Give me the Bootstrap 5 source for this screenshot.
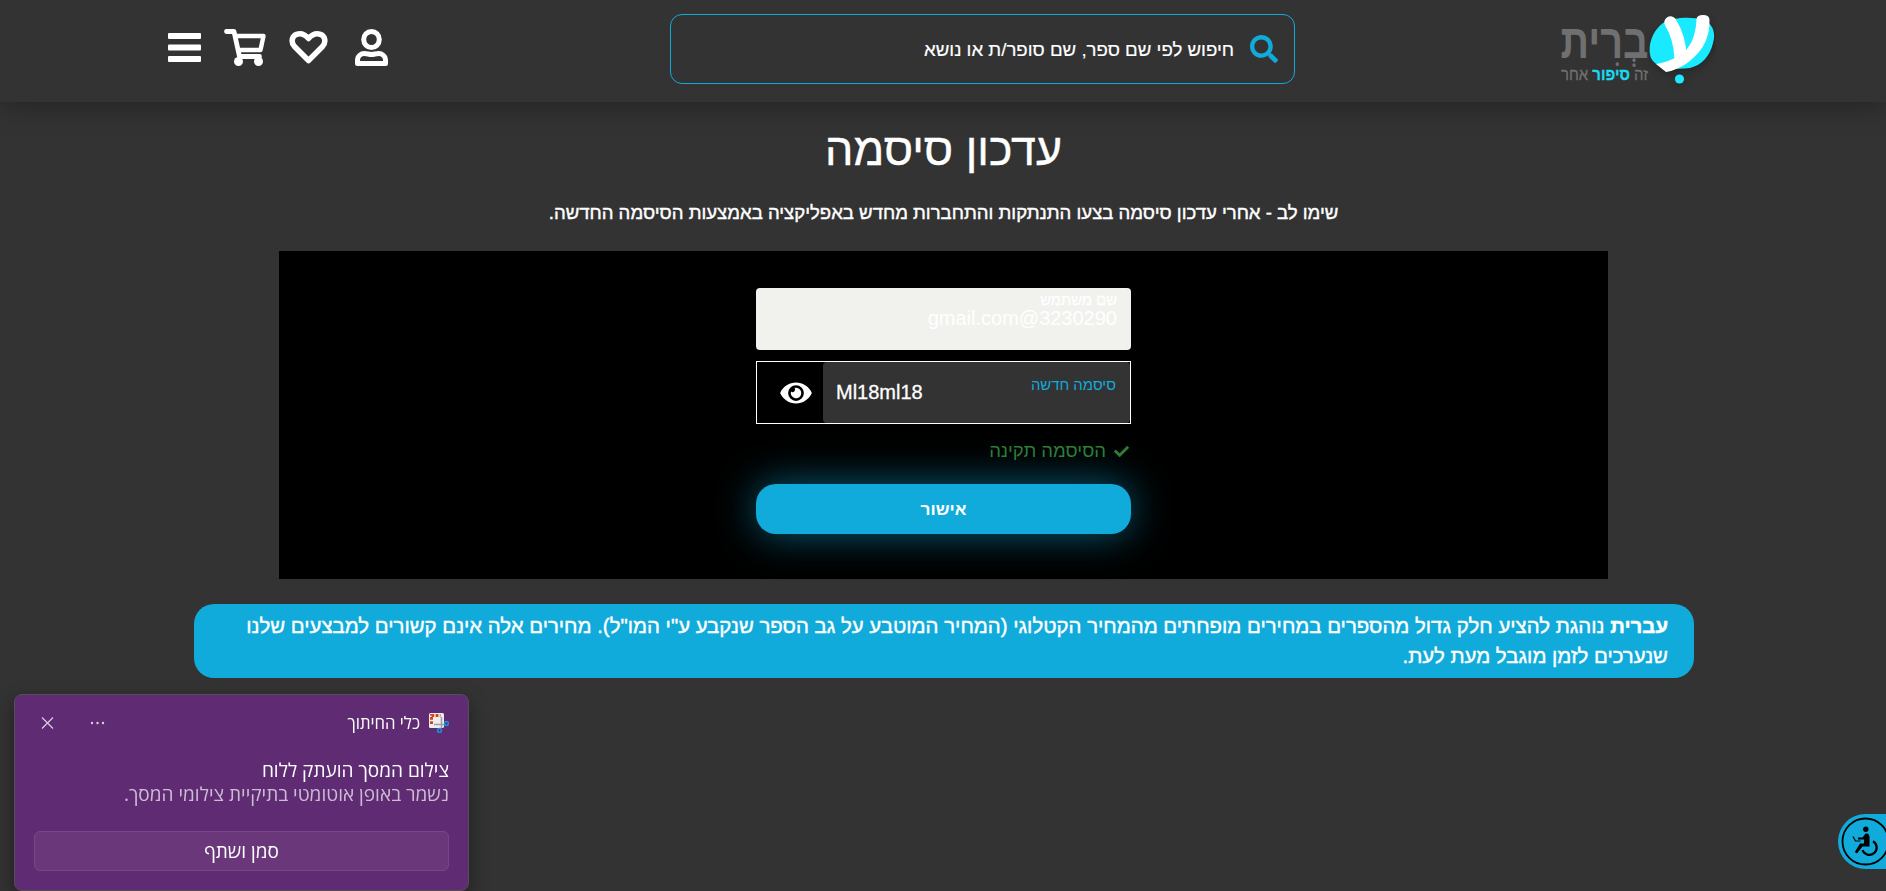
<!DOCTYPE html>
<html lang="he" dir="rtl">
<head>
<meta charset="utf-8">
<meta name="viewport" content="width=device-width, initial-scale=1">
<title>עדכון סיסמה</title>
<link href="https://cdn.jsdelivr.net/npm/bootstrap@5.3.0/dist/css/bootstrap.min.css" rel="stylesheet">
<style>
  :root{--sky:#11abdb}
  body{background:#333;color:#fff;height:100vh;overflow:hidden;font-family:"Liberation Sans",Arial,sans-serif}
  svg{display:block;flex:none}
  .latin{font-size:20px;line-height:20px}
  .sky{color:var(--sky)}
  .semi{-webkit-text-stroke:.4px #fff}

  .topbar{height:102px;background:#333;box-shadow:0 0 30px rgba(0,0,0,.4);padding:0 170px 0 168px}
  .brand{width:173px}
  .brand-mark{filter:drop-shadow(1px 3px 4px rgba(0,0,0,.25))}
  .searchbox{width:625px;height:70px;margin:14px 248px 0 0;border:1px solid var(--sky);border-radius:12px;padding:0 16px}
  .search-hint{font-size:18.65px;line-height:28px;padding-top:2px;-webkit-text-stroke:.2px #fff}
  .tools{margin-top:29px;margin-right:auto}

  main{padding-left:1px}
  .page-title{font-size:44.8px;font-weight:400;line-height:50px;margin:22px 0 27px}
  .page-note{font-size:18.57px;line-height:24px;margin-bottom:26px}
  .panel{width:1329px;height:328px;background:#000;padding-top:37px}
  .formcol{width:375px}
  .userfield{height:62px;background:#f1f2ee;border-radius:4px;padding:4px 14px 0}
  .userfield label{font-size:14.8px;line-height:16px;display:block;-webkit-text-stroke:.3px #fff}
  .passfield{height:63px;margin-top:11px;border:1px solid #fff}
  .pass-in{width:307px;background:#333;border-radius:4px;padding:0 14px 0 13px}
  .pass-in label{font-size:14.9px;line-height:20px;margin-top:13px}
  .pass-in .latin{margin-top:20px;-webkit-text-stroke:.3px #fff}
  .okmsg{color:#2f7d32;font-size:18.5px;line-height:24px;margin-top:15px;padding-right:2px}
  .btn-go,.btn-go:hover{height:50px;margin-top:21px;padding-top:8px;background:var(--sky);border:0;border-radius:20px;box-shadow:0 0 40px rgba(17,171,219,.55);color:#fff;font-size:17.2px;font-weight:700}
  .notice{width:1500px;height:74px;margin-top:25px;background:var(--sky);border-radius:20px;padding:7px 25.5px 0;font-size:20.4px;line-height:30px}

  .snip{position:fixed;left:14px;top:694px;width:455px;height:197px;background:#5f2b73;border:1px solid #574d59;border-radius:8px;box-shadow:0 8px 20px rgba(0,0,0,.4);padding:17px 19px 0;font-family:"Open Sans","Liberation Sans",sans-serif}
  .snip-head{height:22px;font-size:16.7px}
  .snip-head span{margin-right:9px}
  .snip-head .ctl{margin:0 auto 0 7px}
  .snip-body{font-size:19.05px;line-height:24px;margin-top:24px}
  .snip-body div+div{color:#cdbbd4}
  .snip-btn{height:40px;margin-top:25px;background:#6a387a;border:1px solid #784886;border-radius:6px;font-size:19px}
  .access{position:fixed;right:0;top:814px}
</style>
</head>
<body>

<header class="topbar d-flex position-relative">
  <div class="brand">
    <svg width="173" height="100" viewBox="1543 0 173 100" direction="rtl">
      <g class="brand-mark">
        <path d="M1663 23C1673 17 1692 16.500 1704 20C1713 24 1716 33 1713 43C1710 56 1702 65 1690 68C1676 70 1656 69 1651 58C1647 47 1652 31 1663 23Z" fill="#19eaff"/>
        <path d="M1670.500 22.500C1677 33 1680 44 1680.500 57" fill="none" stroke="#fff" stroke-width="12.500" stroke-linecap="round"/>
        <path d="M1696.500 19Q1697 15 1703 15Q1709.500 15 1709.500 20C1710 37 1703 50 1691 60C1683 67 1673 71 1666 72L1656 64C1667 62 1677 58 1684 52C1692 45 1696 33 1696.500 19Z" fill="#fff"/>
        <circle cx="1679.500" cy="79" r="4.600" fill="#19eaff"/>
      </g>
      <text x="1648.500" y="58" font-size="48" font-weight="700" fill="#707070" textLength="88" lengthAdjust="spacingAndGlyphs">בְרִית</text>
      <text x="1648" y="80" font-size="16.500" font-weight="400" fill="#707070" stroke="#707070" stroke-width=".3" textLength="87" lengthAdjust="spacingAndGlyphs">זה <tspan fill="#19d9f0" stroke="#19d9f0" font-weight="700">סיפור</tspan> אחר</text>
    </svg>
  </div>

  <div class="searchbox d-flex align-items-center gap-3">
    <svg width="28" height="28" viewBox="0 0 512 512" fill="#11abdb"><path d="M505 442.700L405.300 343c-4.500-4.500-10.600-7-17-7H372c27.600-35.300 44-79.700 44-128C416 93.100 322.900 0 208 0S0 93.100 0 208s93.100 208 208 208c48.300 0 92.700-16.400 128-44v16.300c0 6.400 2.500 12.500 7 17l99.700 99.700c9.400 9.400 24.600 9.400 33.900 0l28.300-28.300c9.400-9.400 9.400-24.600.1-34zM208 336c-70.700 0-128-57.200-128-128 0-70.700 57.200-128 128-128 70.700 0 128 57.200 128 128 0 70.700-57.200 128-128 128z"/></svg>
    <span class="search-hint">חיפוש לפי שם ספר, שם סופר/ת או נושא</span>
  </div>

  <nav class="tools" dir="ltr">
    <svg width="220" height="38" viewBox="168 29 220 38" fill="none" stroke="#fff" stroke-linecap="round" stroke-linejoin="round">
      <g fill="#fff" stroke="none">
        <rect x="168" y="33" width="33" height="6" rx="1"/>
        <rect x="168" y="44.500" width="33" height="6" rx="1"/>
        <rect x="168" y="56" width="33" height="6" rx="1"/>
        <circle cx="238.500" cy="61.500" r="4.500"/>
        <circle cx="258.500" cy="61.500" r="4.500"/>
      </g>
      <path d="M226.500 31.500H234L239.500 56.500H259.500" stroke-width="4.800"/>
      <path d="M235.500 36H263.500L260.500 50H238.500" stroke-width="4.400"/>
      <path d="M308.500 60.500L294.500 46.500C290.500 42 292 36 296.500 34.400C301 32.800 305 34.500 308.500 38.500C312 34.500 316 32.800 320.500 34.400C325 36 326.500 42 322.500 46.500Z" stroke-width="5.500"/>
      <ellipse cx="371.500" cy="39.500" rx="7.800" ry="8" stroke-width="5"/>
      <path d="M357.500 63.500V60.500C357.500 56 361 53.500 364.500 53.500C367 53.500 369 54.500 371.500 54.500C374 54.500 376 53.500 378.500 53.500C382 53.500 385.500 56 385.500 60.500V63.500Z" stroke-width="5"/>
    </svg>
  </nav>
</header>

<main class="d-flex flex-column align-items-center">
  <h1 class="page-title semi">עדכון סיסמה</h1>
  <p class="page-note semi">שימו לב - אחרי עדכון סיסמה בצעו התנתקות והתחברות מחדש באפליקציה באמצעות הסיסמה החדשה.</p>

  <section class="panel">
    <form class="formcol mx-auto">
      <div class="userfield">
        <label>שם משתמש</label>
        <div class="latin">3230290@gmail.com</div>
      </div>
      <div class="passfield d-flex">
        <div class="pass-in d-flex justify-content-between align-items-start">
          <label class="sky">סיסמה חדשה</label>
          <span class="latin">Ml18ml18</span>
        </div>
        <div class="flex-grow-1 d-flex align-items-center justify-content-center ps-2 ms-1">
          <svg width="32" height="28" viewBox="0 0 576 512" fill="#fff"><path d="M572.520 241.400C518.290 135.590 410.930 64 288 64S57.680 135.640 3.480 241.410a32.350 32.350 0 0 0 0 29.190C57.710 376.410 165.070 448 288 448s230.320-71.640 284.520-177.410a32.350 32.350 0 0 0 0-29.190zM288 400a144 144 0 1 1 144-144 143.930 143.930 0 0 1-144 144zm0-240a95.310 95.310 0 0 0-25.310 3.790 47.850 47.850 0 0 1-66.900 66.900A95.780 95.780 0 1 0 288 160z"/></svg>
        </div>
      </div>
      <div class="okmsg d-flex align-items-center gap-2">
        <svg width="15" height="15" viewBox="0 0 512 512" fill="currentColor"><path d="M173.898 439.404l-166.400-166.400c-9.997-9.997-9.997-26.206 0-36.204l36.203-36.204c9.997-9.998 26.207-9.998 36.204 0L192 312.690 432.095 72.596c9.997-9.997 26.207-9.997 36.204 0l36.203 36.204c9.997 9.997 9.997 26.206 0 36.204l-294.400 294.401c-9.998 9.997-26.207 9.997-36.204-.001z"/></svg>
        <span>הסיסמה תקינה</span>
      </div>
      <button type="button" class="btn btn-go w-100">אישור</button>
    </form>
  </section>

  <p class="notice semi mb-0"><span class="fw-bold">עברית</span> נוהגת להציע חלק גדול מהספרים במחירים מופחתים מהמחיר הקטלוגי (המחיר המוטבע על גב הספר שנקבע ע"י המו"ל). מחירים אלה אינם קשורים למבצעים שלנו שנערכים לזמן מוגבל מעת לעת.</p>
</main>

<aside class="snip">
  <div class="snip-head d-flex align-items-center">
    <svg width="20" height="20" viewBox="0 0 20 20">
      <rect width="15" height="15" rx="1.500" fill="#eee"/>
      <path d="M2.500 11V2.500H11.500" fill="none" stroke="#d8431f" stroke-width="3" stroke-dasharray="2.800 1.400"/>
      <path d="M12.500 4V15M5 11.500H16" fill="none" stroke="#9aa0a6" stroke-width="1.600"/>
      <circle cx="17.500" cy="10.500" r="1.900" fill="none" stroke="#1d90dd" stroke-width="1.500"/>
      <circle cx="10.500" cy="17.500" r="1.900" fill="none" stroke="#1d90dd" stroke-width="1.500"/>
    </svg>
    <span>כלי החיתוך</span>
    <svg class="ctl" width="64" height="14" viewBox="41 716 64 14">
      <g fill="#dccfe2"><circle cx="92" cy="723" r="1.200"/><circle cx="97.500" cy="723" r="1.200"/><circle cx="103" cy="723" r="1.200"/></g>
      <path d="M42 717.500L53 728.500M53 717.500L42 728.500" stroke="#dccfe2" stroke-width="1.200"/>
    </svg>
  </div>
  <div class="snip-body">
    <div>צילום המסך הועתק ללוח</div>
    <div>נשמר באופן אוטומטי בתיקיית צילומי המסך.</div>
  </div>
  <div class="snip-btn d-flex align-items-center justify-content-center">סמן ושתף</div>
</aside>

<div class="access">
  <svg width="48" height="55" viewBox="1838 814 48 55">
    <path d="M1886 814H1865.500A27.500 27.500 0 0 0 1865.500 869H1886Z" fill="#11abdb"/>
    <circle cx="1865.500" cy="841.500" r="23" fill="none" stroke="#000" stroke-width="1.800"/>
    <circle cx="1865.800" cy="829.300" r="2.700"/>
    <path d="M1865.500 833.500C1868.500 833 1869.800 835 1869.500 838V846.500H1862.500L1857 853.500L1854.800 852L1860 843.500H1864V839.500H1858V837.500H1862.500Z"/>
    <path d="M1873 841.200A7.300 7.300 0 1 1 1862.500 850" fill="none" stroke="#000" stroke-width="2.200"/>
    <path d="M1853 836.500L1855.500 841H1860.500" fill="none" stroke="#000" stroke-width="1.200"/>
  </svg>
</div>

<script src="https://cdn.jsdelivr.net/npm/bootstrap@5.3.0/dist/js/bootstrap.bundle.min.js"></script>
</body>
</html>
